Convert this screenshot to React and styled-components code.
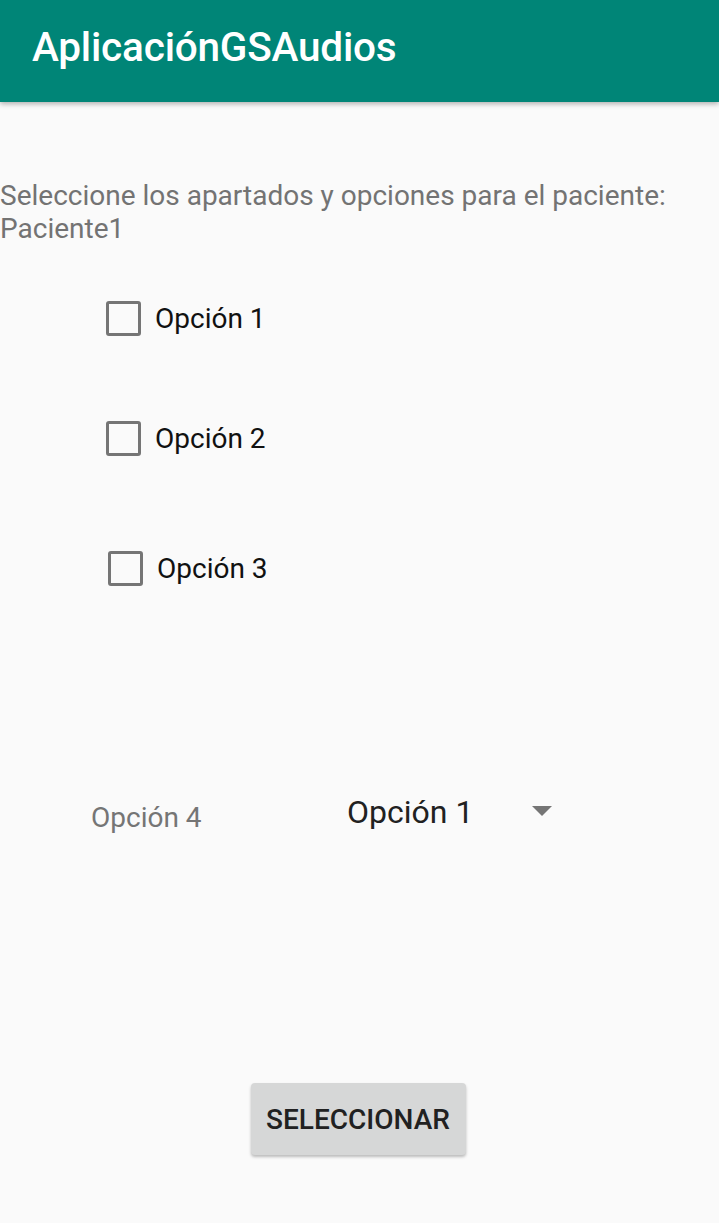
import React, { useState } from 'react';
import styled, { createGlobalStyle } from 'styled-components';

const GlobalStyle = createGlobalStyle`
  html, body {
    margin: 0;
    padding: 0;
    background: #fafafa;
    font-family: Roboto, "Liberation Sans", sans-serif;
  }
`;

const options = ['Opción 1', 'Opción 2', 'Opción 3'];

const App = () => {
  const [checked, setChecked] = useState({});

  const toggle = (name) => setChecked({ ...checked, [name]: !checked[name] });

  return (
    <Screen>
      <GlobalStyle />
      <AppBar>
        <AppTitle>AplicaciónGSAudios</AppTitle>
      </AppBar>
      <Content>
        <Intro>
          Seleccione los apartados y opciones para el paciente:
          <br />
          Paciente1
        </Intro>

        <CheckList>
          {options.map((name, i) => (
            <CheckRow key={name} $shift={i === 2 ? 2 : 0} onClick={() => toggle(name)}>
              <Box $on={checked[name]} />
              <CheckLabel>{name}</CheckLabel>
            </CheckRow>
          ))}
        </CheckList>

        <SpinnerRow>
          <SpinnerLabel>Opción 4</SpinnerLabel>
          <Spinner>
            <SpinnerValue>Opción 1</SpinnerValue>
            <Arrow />
          </Spinner>
        </SpinnerRow>

        <ButtonWrap>
          <Button>SELECCIONAR</Button>
        </ButtonWrap>
      </Content>
    </Screen>
  );
};

export default App;

const Screen = styled.div`
  width: 719px;
  height: 1223px;
  background: #fafafa;
  display: flex;
  flex-direction: column;
  overflow: hidden;
`;

const AppBar = styled.header`
  height: 102px;
  background: #008577;
  box-shadow: 0 2px 5px rgba(0, 0, 0, 0.3);
  display: flex;
  align-items: center;
  padding-left: 32px;
  position: relative;
  z-index: 1;
`;

const AppTitle = styled.h1`
  margin: 0;
  margin-top: -8px;
  font-size: 40.5px;
  font-weight: 500;
  color: #ffffff;
  letter-spacing: -0.2px;
`;

const Content = styled.main`
  display: flex;
  flex-direction: column;
`;

const Intro = styled.p`
  margin: 77px 0 0;
  font-size: 28px;
  line-height: 33px;
  color: #737373;
`;

const CheckList = styled.div`
  display: flex;
  flex-direction: column;
  margin-top: 55px;
  padding-left: 106px;
  gap: 84px;
`;

const CheckRow = styled.label`
  display: flex;
  align-items: center;
  height: 36px;
  margin-left: ${(p) => p.$shift}px;
  cursor: pointer;
  &:nth-child(3) {
    margin-top: 10px;
  }
`;

const Box = styled.span`
  width: 29px;
  height: 29px;
  border: 3.5px solid #757575;
  border-radius: 3px;
  background: ${(p) => (p.$on ? '#008577' : 'transparent')};
`;

const CheckLabel = styled.span`
  margin-left: 14px;
  font-size: 28px;
  color: #111111;
`;

const SpinnerRow = styled.div`
  display: flex;
  align-items: center;
  margin-top: 203px;
  padding-left: 91px;
`;

const SpinnerLabel = styled.span`
  font-size: 28px;
  color: #757575;
  width: 256px;
  margin-top: 12px;
`;

const Spinner = styled.div`
  display: flex;
  align-items: center;
`;

const SpinnerValue = styled.span`
  font-size: 32px;
  color: #212121;
  width: 185px;
`;

const Arrow = styled.span`
  width: 0;
  height: 0;
  margin-top: -2px;
  border-left: 10px solid transparent;
  border-right: 10px solid transparent;
  border-top: 10px solid #757575;
`;

const ButtonWrap = styled.div`
  display: flex;
  justify-content: center;
  margin-top: 249px;
  padding-right: 3px;
`;

const Button = styled.button`
  width: 215px;
  height: 72px;
  border: none;
  border-radius: 4px;
  background: #d6d7d7;
  box-shadow: 0 2px 3px rgba(0, 0, 0, 0.25);
  font-family: Roboto, "Liberation Sans", sans-serif;
  font-size: 28px;
  font-weight: 500;
  color: #212121;
  cursor: pointer;
  padding: 0;
`;
